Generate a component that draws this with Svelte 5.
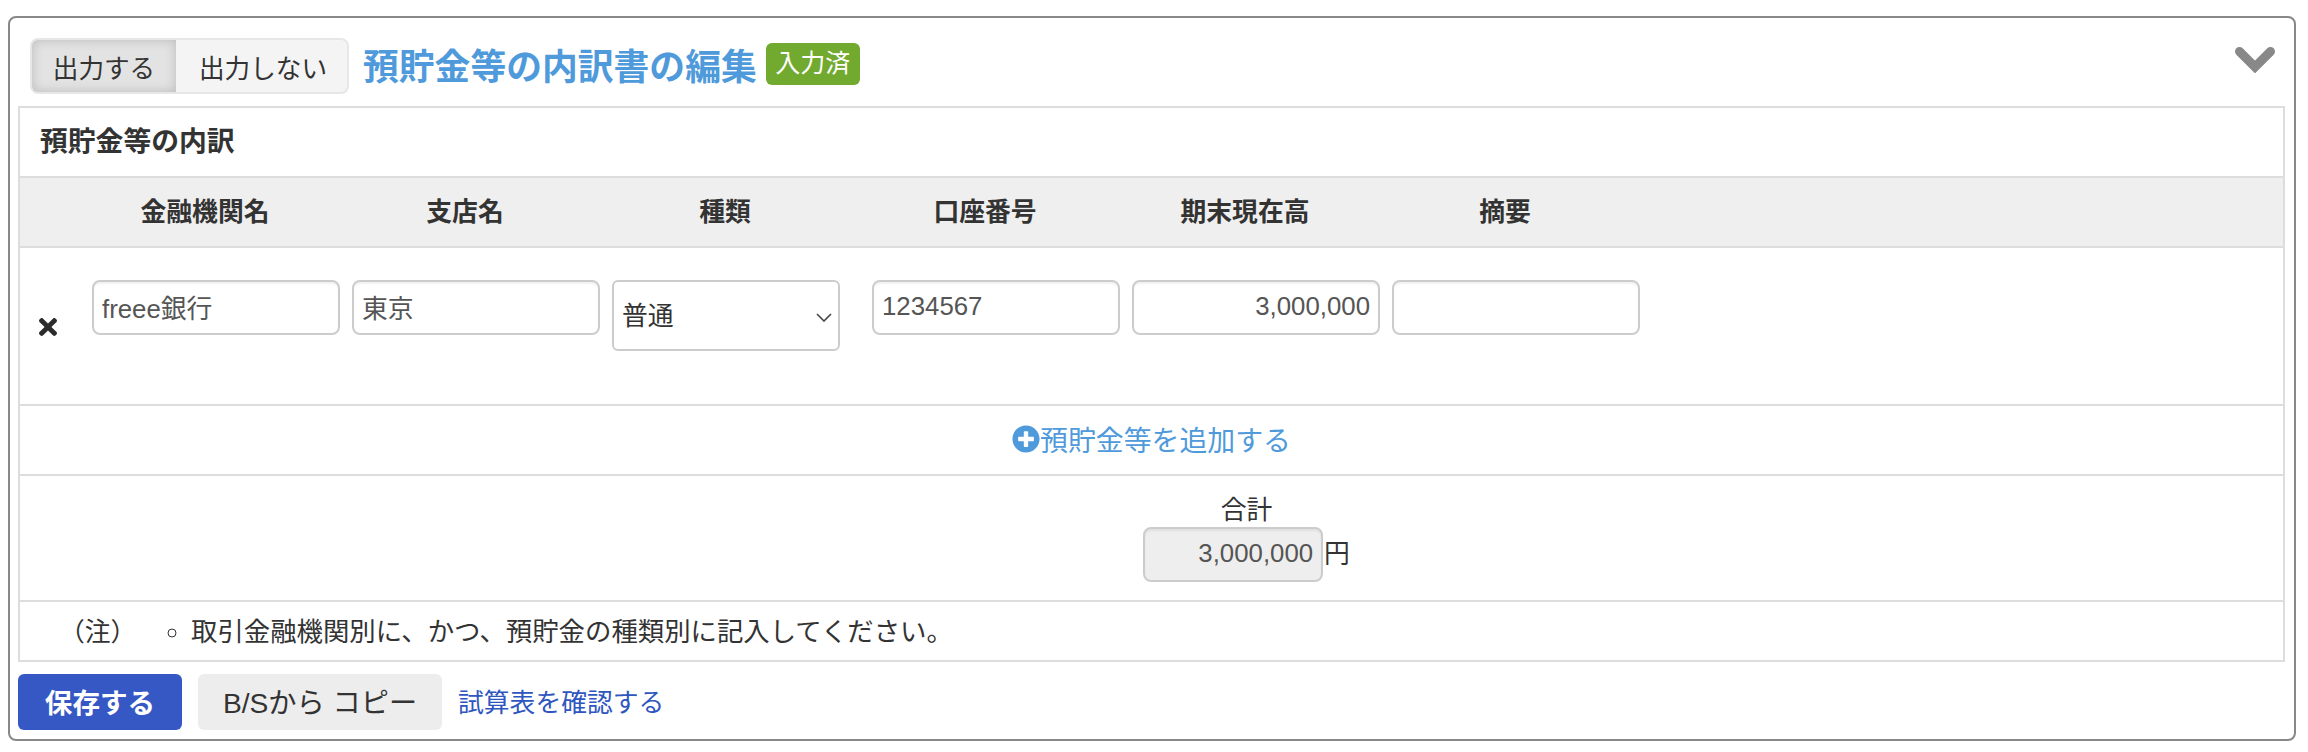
<script>
  const headers = ['金融機関名', '支店名', '種類', '口座番号', '期末現在高', '摘要'];
  const note = '取引金融機関別に、かつ、預貯金の種類別に記入してください。';
</script>

<div class="page">
  <section class="card">
    <header class="card-head">
      <div class="toggle">
        <button class="toggle-btn active">出力する</button>
        <button class="toggle-btn">出力しない</button>
      </div>
      <h2 class="title">預貯金等の内訳書の編集</h2>
      <span class="badge">入力済</span>
      <svg class="collapse" width="40" height="26" viewBox="0 0 40 26">
        <path d="M4.5 4.5 20 20 35.5 4.5" fill="none" stroke="#888" stroke-width="9" stroke-linecap="round" stroke-linejoin="miter" />
      </svg>
    </header>

    <div class="box">
      <div class="box-title">預貯金等の内訳</div>

      <div class="grid heads">
        <div></div>
        {#each headers as h}
          <div class="head">{h}</div>
        {/each}
      </div>

      <div class="grid entry">
        <button class="remove" aria-label="削除">
          <svg width="18" height="18" viewBox="0 80 352 352">
            <path d="M242.72 256l100.07-100.07c12.28-12.28 12.28-32.19 0-44.48l-22.24-22.24c-12.28-12.28-32.19-12.28-44.48 0L176 189.28 75.93 89.21c-12.28-12.28-32.19-12.28-44.48 0L9.21 111.45c-12.28 12.28-12.28 32.19 0 44.48L109.28 256 9.21 356.07c-12.28 12.28-12.28 32.19 0 44.48l22.24 22.24c12.28 12.28 32.2 12.28 44.48 0L176 322.72l100.07 100.07c12.28 12.28 32.2 12.28 44.48 0l22.24-22.24c12.28-12.28 12.28-32.19 0-44.48L242.72 256z" fill="#2b2b2b" />
          </svg>
        </button>
        <div class="cell"><input class="field" value="freee銀行" /></div>
        <div class="cell"><input class="field" value="東京" /></div>
        <div class="cell">
          <div class="select-wrap">
            <select class="select">
              <option>普通</option>
              <option>当座</option>
            </select>
            <svg class="select-arrow" width="16" height="9" viewBox="0 0 16 9">
              <path d="M1 1 8 8 15 1" fill="none" stroke="#444" stroke-width="1.6" />
            </svg>
          </div>
        </div>
        <div class="cell"><input class="field" value="1234567" /></div>
        <div class="cell"><input class="field num" value="3,000,000" /></div>
        <div class="cell"><input class="field" value="" /></div>
      </div>

      <div class="add-row">
        <a class="add" href="#add">
          <svg width="28" height="28" viewBox="0 0 512 512">
            <path d="M256 8C119 8 8 119 8 256s111 248 248 248 248-111 248-248S393 8 256 8zm144 276c0 6.6-5.4 12-12 12h-92v92c0 6.6-5.4 12-12 12h-56c-6.6 0-12-5.4-12-12v-92h-92c-6.6 0-12-5.4-12-12v-56c0-6.6 5.4-12 12-12h92v-92c0-6.6 5.4-12 12-12h56c6.6 0 12 5.4 12 12v92h92c6.6 0 12 5.4 12 12v56z" fill="#4f9adb" />
          </svg>預貯金等を追加する</a>
      </div>

      <div class="total-row">
        <div class="total">
          <label class="total-label" for="total">合計</label>
          <div class="total-line">
            <input id="total" class="field num readonly" value="3,000,000" readonly />
            <span class="yen">円</span>
          </div>
        </div>
      </div>

      <div class="note-row">
        <span class="note-label">（注）</span>
        <ul class="notes">
          <li>{note}</li>
        </ul>
      </div>
    </div>

    <footer class="actions">
      <button class="btn primary">保存する</button>
      <button class="btn">B/Sから コピー</button>
      <a class="link" href="#trial">試算表を確認する</a>
    </footer>
  </section>
</div>

<style>
  :global(body) {
    background: #fff;
  }

  .page {
    padding: 16px 12px 11px 8px;
    font-family: "Liberation Sans", "Noto Sans CJK JP", sans-serif;
    font-size: 25.8px;
    color: #333;
  }

  .card {
    border: 2px solid #888;
    border-radius: 8px;
    padding: 0 8px 9px;
    height: 725px;
    box-sizing: border-box;
  }

  .card-head {
    display: flex;
    align-items: center;
    height: 56px;
    padding: 20px 10px 12px 12px;
  }

  .toggle {
    display: flex;
    height: 56px;
    box-sizing: border-box;
    border: 2px solid #e8e7e8;
    border-radius: 8px;
    background: #f5f4f5;
    overflow: hidden;
  }

  .toggle-btn {
    border: 0;
    background: transparent;
    font: inherit;
    font-size: 25.6px;
    color: #333;
    padding: 0 20px 0 23px;
  }

  .toggle-btn.active {
    width: 144px;
    padding: 0;
    background: #e4e3e4;
    box-shadow: inset 0 0 12px rgba(0, 0, 0, 0.18);
  }

  .title {
    margin: 0 0 5px 14px;
    font-size: 35.8px;
    font-weight: 700;
    color: #4f9adb;
  }

  .badge {
    margin: 0 0 4px 9px;
    width: 94px;
    height: 42px;
    line-height: 41px;
    text-align: center;
    border-radius: 6px;
    background: #72a92f;
    color: #fff;
    font-size: 25px;
  }

  .collapse {
    margin: 0 1px 13px auto;
  }

  .box {
    border: 2px solid #ddd;
    margin-right: 1px;
  }

  .box-title {
    height: 68px;
    line-height: 68px;
    padding-left: 20px;
    font-size: 27.8px;
    font-weight: 700;
    border-bottom: 2px solid #ddd;
  }

  .grid {
    display: grid;
    grid-template-columns: 68px repeat(6, 260px);
  }

  .heads {
    height: 68px;
    align-items: center;
    background: #efefef;
    border-bottom: 2px solid #ddd;
    font-weight: 700;
  }

  .head {
    text-align: center;
    padding-right: 26px;
    padding-bottom: 5px;
  }

  .entry {
    height: 158px;
    padding-top: 32px;
    box-sizing: border-box;
    align-items: start;
    border-bottom: 2px solid #ddd;
  }

  .remove {
    border: 0;
    padding: 38px 0 0 19px;
    background: none;
    text-align: left;
    line-height: 0;
  }

  .cell {
    padding-left: 4px;
  }

  .field {
    width: 248px;
    height: 55px;
    box-sizing: border-box;
    padding: 0 8px 2px 8px;
    border: 2px solid #ccc;
    border-radius: 8px;
    box-shadow: inset 0 2px 2px rgba(0, 0, 0, 0.06);
    font: inherit;
    color: #555;
    outline: none;
  }

  .num {
    text-align: right;
  }

  .select-wrap {
    position: relative;
    width: 228px;
  }

  .select {
    display: block;
    width: 100%;
    height: 71px;
    box-sizing: border-box;
    padding: 0 8px;
    appearance: none;
    background: #fff;
    border: 2px solid #ccc;
    border-radius: 6px;
    font: inherit;
    color: #333;
  }

  .select-arrow {
    position: absolute;
    right: 8px;
    top: 33px;
  }

  .add-row {
    height: 68px;
    display: flex;
    align-items: center;
    justify-content: center;
    border-bottom: 2px solid #ddd;
  }

  .add {
    display: flex;
    align-items: center;
    padding-bottom: 2px;
    font-size: 27.9px;
    color: #4f9adb;
    text-decoration: none;
  }

  .total-row {
    display: flex;
    justify-content: center;
    padding-left: 190px;
    box-sizing: border-box;
    border-bottom: 2px solid #ddd;
    height: 126px;
  }

  .total {
    display: flex;
    flex-direction: column;
    align-items: center;
    padding-top: 18px;
  }

  .total-label {
    line-height: 33px;
  }

  .total-line {
    display: flex;
    align-items: center;
  }

  .readonly {
    width: 180px;
    background: #eee;
  }

  .yen {
    margin-left: 1px;
    padding-bottom: 6px;
  }

  .note-row {
    height: 58px;
    display: flex;
    align-items: center;
    padding: 0 0 4px 39px;
    box-sizing: border-box;
  }

  .note-label {
    width: 72px;
  }

  .notes {
    margin: 0;
    padding: 0 0 0 60px;
    list-style: circle;
    font-size: 26.4px;
  }

  .actions {
    display: flex;
    align-items: center;
    gap: 16px;
    margin-top: 12px;
  }

  .btn {
    height: 56px;
    padding: 0 0 3px;
    width: 244px;
    border: 0;
    border-radius: 6px;
    background: #eeedee;
    font: inherit;
    font-size: 28.2px;
    color: #333;
  }

  .btn.primary {
    width: 164px;
    background: #3558c4;
    color: #fff;
    font-size: 27.6px;
    font-weight: 700;
  }

  .link {
    margin-bottom: 3px;
    color: #2f56bf;
    text-decoration: none;
  }
</style>
